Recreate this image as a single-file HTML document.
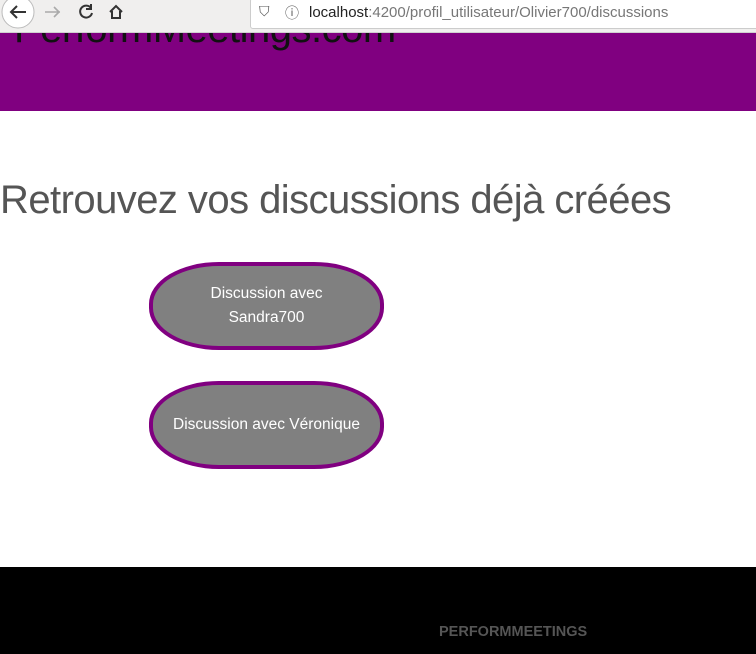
<!DOCTYPE html>
<html><head><style>
body{margin:0;width:756px;height:654px;overflow:hidden;font-family:"Liberation Sans",sans-serif;background:#fff;position:relative}
.chrome{position:absolute;top:0;left:0;width:756px;height:32px;background:#f0efee;border-bottom:1px solid #d0d0d0}
.url{position:absolute;left:250px;top:-2px;width:520px;height:29px;background:#fff;border:1px solid #ccc;border-radius:3px}
.hdr{position:absolute;top:33px;left:0;width:756px;height:78px;background:#800080;overflow:hidden}
.hdr span{position:absolute;left:14px;top:-26px;font-size:40px;color:#111;font-weight:300;letter-spacing:-0.5px}
h1{position:absolute;left:0;top:178px;margin:0;font-size:40px;font-weight:300;color:#555;white-space:nowrap;letter-spacing:-0.55px}
.btn{position:absolute;left:149px;width:227px;height:80px;background:#808080;border:4px solid #800080;border-radius:70px/42px;color:#fff;font-size:15.5px;display:flex;align-items:center;justify-content:center;text-align:center;line-height:24px}
.ft{position:absolute;top:567px;left:0;width:756px;height:87px;background:#000}
.ft span{position:absolute;left:439px;top:57px;color:#555;font-weight:bold;font-size:14.5px}
</style></head><body>
<div class="chrome">
<svg width="240" height="32" style="position:absolute;left:0;top:0">
<circle cx="18" cy="12" r="16" fill="#fff" stroke="#bbb"/>
<path d="M26 12H11M17 6l-6 6 6 6" stroke="#333" stroke-width="2" fill="none"/>
<path d="M60 12H45M54 7l5 5-5 5" stroke="#aaa" stroke-width="1.6" fill="none"/>
<path d="M91 8a6 6 0 1 0 1 5M91 4v5h-5" stroke="#333" stroke-width="2" fill="none"/>
<path d="M110 12l6-6 6 6M112 11v7h8v-7" stroke="#333" stroke-width="2" fill="none"/>
</svg>
<div class="url"><span style="position:absolute;left:8px;top:4px;font-size:14px;color:#555">⛉</span><span style="position:absolute;left:34px;top:4px;font-size:14px;color:#555">ⓘ</span><span style="position:absolute;left:58px;top:5px;font-size:15px;color:#777"><b style="color:#222;font-weight:normal">localhost</b>:4200/profil_utilisateur/Olivier700/discussions</span></div>
</div>
<div class="hdr"><span>PerformMeetings.com</span></div>
<h1>Retrouvez vos discussions déjà créées</h1>
<div class="btn" style="top:262px">Discussion avec<br>Sandra700</div>
<div class="btn" style="top:381px">Discussion avec Véronique</div>
<div class="ft"><span>PERFORMMEETINGS</span></div>
</body></html>
